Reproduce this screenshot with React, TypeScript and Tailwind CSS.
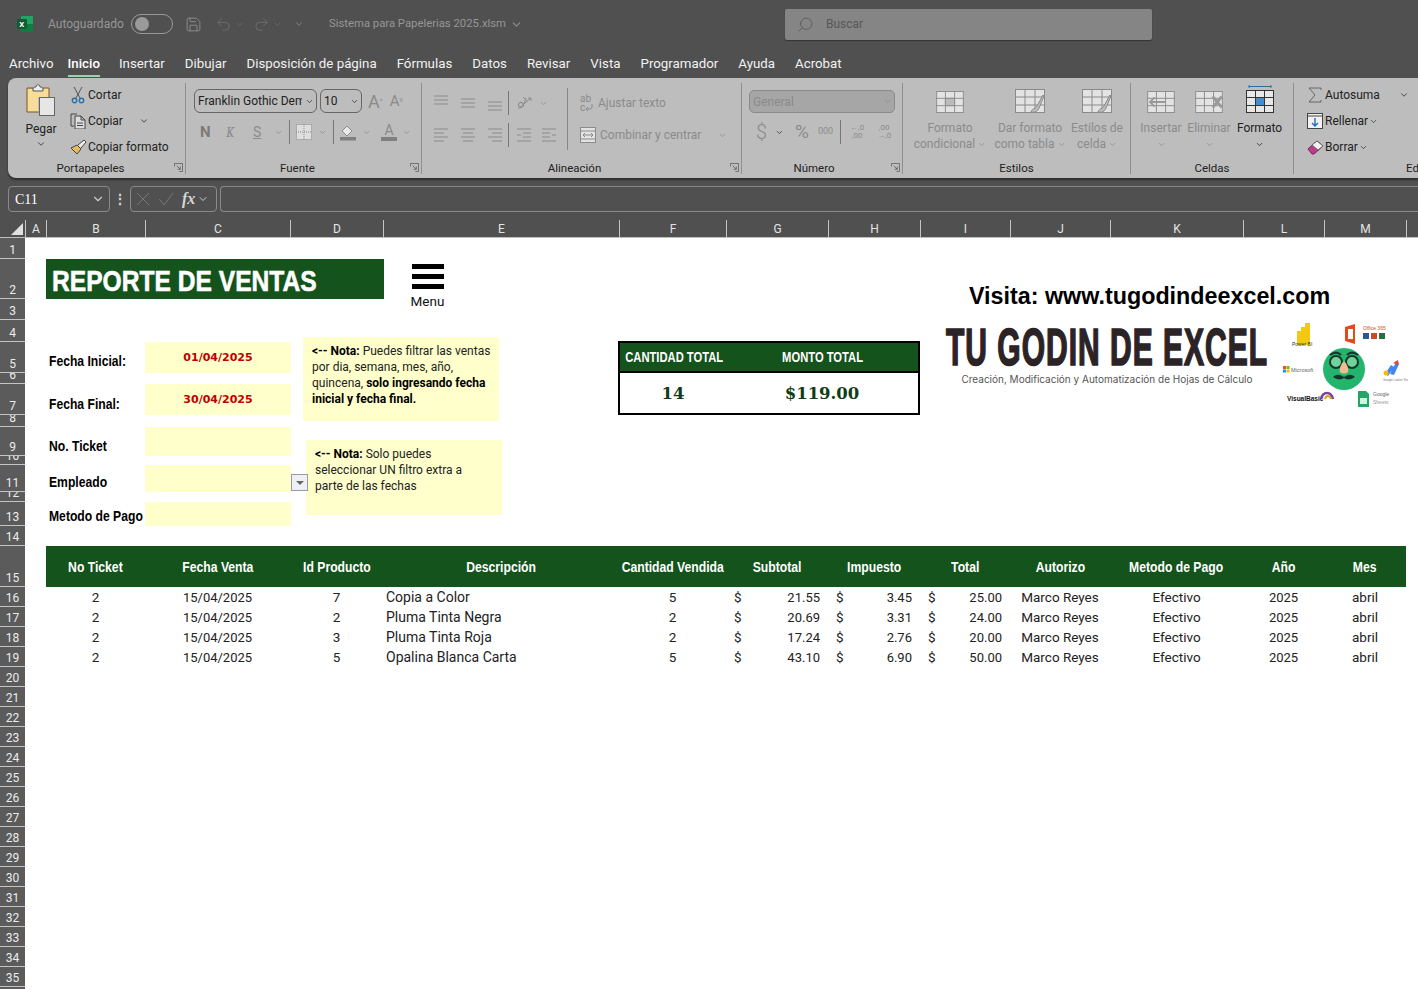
import { ChevronDown, Search, Undo2, Redo2, Save } from "lucide-react"
import type { ReactNode } from "react"

const sheetCols =
  "grid grid-cols-[21px_99px_145px_93px_236px_107px_102px_92px_90px_100px_133px_81px_82px]"
const heavy = "font-['Liberation_Sans',sans-serif] font-bold"
const dim = "#8b8b8b"

const columns = [
  ["A", 21], ["B", 99], ["C", 145], ["D", 93], ["E", 236], ["F", 107], ["G", 102],
  ["H", 92], ["I", 90], ["J", 100], ["K", 133], ["L", 81], ["M", 82],
] as const

const rowHeights = [
  21, 40, 21, 22, 31, 11, 31, 12, 29, 9, 27, 10, 24, 20, 41,
  20, 20, 20, 20, 20, 20, 20, 20, 20, 20, 20, 20, 20, 20, 20, 20, 20, 20, 20, 20,
]

const ventas = [
  { fecha: "15/04/2025", id: 7, desc: "Copia a Color", qty: 5, sub: "21.55", imp: "3.45", tot: "25.00" },
  { fecha: "15/04/2025", id: 2, desc: "Pluma Tinta Negra", qty: 2, sub: "20.69", imp: "3.31", tot: "24.00" },
  { fecha: "15/04/2025", id: 3, desc: "Pluma Tinta Roja", qty: 2, sub: "17.24", imp: "2.76", tot: "20.00" },
  { fecha: "15/04/2025", id: 5, desc: "Opalina Blanca Carta", qty: 5, sub: "43.10", imp: "6.90", tot: "50.00" },
]

const headers = [
  "No Ticket", "Fecha Venta", "Id Producto", "Descripción", "Cantidad Vendida", "Subtotal",
  "Impuesto", "Total", "Autorizo", "Metodo de Pago", "Año", "Mes",
]

const tabs = ["Insertar", "Dibujar", "Disposición de página", "Fórmulas", "Datos", "Revisar", "Vista", "Programador", "Ayuda", "Acrobat"]

function Chev({ color = "#333", size = 10 }: { color?: string; size?: number }) {
  return <ChevronDown size={size} color={color} strokeWidth={2} className="shrink-0" />
}

function Launcher() {
  return (
    <svg width="9" height="9" viewBox="0 0 10 10" fill="none" stroke="#666" className="absolute right-[2px] bottom-[2px]">
      <path d="M.5 4V.5H9.5V9.5H6M3 3l4 4M7 4v3H4" />
    </svg>
  )
}

function Group({ width, label, labelPad = "", launcher, children }: { width: string; label: string; labelPad?: string; launcher?: boolean; children: ReactNode }) {
  return (
    <section className={`${width} relative flex shrink-0 flex-col border-r border-[#8f8f8f]`}>
      <div className="min-h-0 flex-1">{children}</div>
      <div className={`${labelPad} h-[12px] text-center text-[11.5px] leading-[12px] text-[#222]`}>{label}</div>
      {launcher && <Launcher />}
    </section>
  )
}

function Bars({ rows }: { rows: number[][] }) {
  return (
    <svg width="16" height="18" viewBox="0 0 16 18" stroke={dim} className="shrink-0">
      {rows.map(([x1, x2, y], i) => (
        <path key={i} d={`M${x1} ${y}H${x2}`} />
      ))}
    </svg>
  )
}

function Grid({ w = 30, h = 24, color = "#8a8a8a", children }: { w?: number; h?: number; color?: string; children?: ReactNode }) {
  return (
    <svg width={w} height={h} viewBox="0 0 30 24" fill="none" stroke={color}>
      <rect x=".5" y=".5" width="29" height="23" fill="#e3e3e3" />
      <path d="M0 8H30M0 16H30M10 0V24M20 0V24" />
      {children}
    </svg>
  )
}

function Brush() {
  return <path d="M16 23c1-4 5-3 6-6l6-11 1 1-5 12c-1 3-4 5-8 4z" fill="#bdbdbd" stroke="#8a8a8a" />
}

function BigButton({ width, icon, lines, active }: { width: string; icon: ReactNode; lines: string[]; active?: boolean }) {
  const tone = active ? "text-[#222]" : "text-[#8b8b8b]"
  return (
    <div className={`${width} flex shrink-0 flex-col items-center ${tone}`}>
      <div className="flex h-[29px] items-end">{icon}</div>
      <div className="mt-[7px] flex h-[16px] items-center whitespace-nowrap text-xs">{lines[0]}</div>
      <div className="flex h-[16px] items-center justify-center gap-[2px] whitespace-nowrap text-xs">
        {lines[1]}
        <Chev color={active ? "#222" : dim} size={9} />
      </div>
    </div>
  )
}

function SmallRow({ icon, text }: { icon: ReactNode; text: string }) {
  return (
    <div className="flex h-[26px] items-center gap-[1px] whitespace-nowrap text-xs text-[#222]">
      <span className="flex w-[18px] justify-center">{icon}</span>
      {text}
    </div>
  )
}

function Ribbon() {
  return (
    <div className="ml-[8px] flex h-[100px] rounded-l-[8px] bg-[#bdbdbd] pb-[4px] pt-[5px] shadow-[0_2px_2px_#2c2c2c]">
      <Group width="w-[178px]" label="Portapapeles" labelPad="pr-[12px]" launcher>
        <div className="flex">
          <div className="flex w-[60px] flex-col items-center pl-[6px] text-xs text-[#222]">
            <svg width="32" height="34" viewBox="0 0 32 34" fill="none">
              <path d="M2 5h6M18 5h6v10M2 5v24h12" stroke="#7a5a20" fill="#f5d98f" />
              <path d="M3 6h20v8H13v14H3z" fill="#f7dc9a" />
              <path d="M8 6c0-2 2-2 3-2 0-3 4-3 4 0 1 0 3 0 3 2v2H8z" fill="#eee" stroke="#555" />
              <rect x="14.5" y="14.5" width="15" height="18" fill="#e6e6e6" stroke="#666" />
            </svg>
            <div className="mt-[4px]">Pegar</div>
            <div className="mt-[2px]"><Chev /></div>
          </div>
          <div className="-mt-[1px] ml-[1px]">
            <SmallRow
              text="Cortar"
              icon={
                <svg width="14" height="18" viewBox="0 0 14 18" fill="none" stroke="#555">
                  <path d="M3 1l6 11M11 1L5 12" />
                  <circle cx="3.5" cy="14.5" r="2.2" stroke="#2a6fb0" strokeWidth="1.4" />
                  <circle cx="10.5" cy="14.5" r="2.2" stroke="#2a6fb0" strokeWidth="1.4" />
                </svg>
              }
            />
            <div className="flex items-center gap-[16px]">
              <SmallRow
                text="Copiar"
                icon={
                  <svg width="16" height="16" viewBox="0 0 16 16" fill="none" stroke="#444">
                    <path d="M4 13H1V1h6" />
                    <path d="M5 3h6l4 4v9H5zM11 3v4h4M7 10h6M7 12.5h6" fill="#ddd" />
                  </svg>
                }
              />
              <Chev />
            </div>
            <SmallRow
              text="Copiar formato"
              icon={
                <svg width="17" height="16" viewBox="0 0 17 16" fill="none">
                  <path d="M1 9l6-3 4 4-4 5z" fill="#e9bd55" stroke="#444" />
                  <path d="M8 6l6-5 2 2-5 6" fill="#eee" stroke="#444" />
                </svg>
              }
            />
          </div>
        </div>
      </Group>

      <Group width="w-[236px]" label="Fuente" labelPad="pr-[12px]" launcher>
        <div className="pl-[8px] pt-[6px]">
          <div className="flex h-[24px] items-center">
            <div className="flex h-[24px] w-[123px] items-center justify-between overflow-hidden rounded-[6px] border border-[#666] pl-[3px] pr-[2px] text-xs text-[#222]">
              <span className="w-[104px] overflow-hidden whitespace-nowrap">Franklin Gothic Demi</span>
              <Chev size={9} />
            </div>
            <div className="ml-[3px] flex h-[24px] w-[42px] items-center justify-between rounded-[6px] border border-[#666] pl-[3px] pr-[2px] text-xs text-[#222]">
              10
              <Chev size={9} />
            </div>
            <span className="ml-[6px] text-[18px] text-[#8b8b8b]">A<sup className="text-[7px]">^</sup></span>
            <span className="ml-[7px] text-[15px] text-[#8b8b8b]">A<sup className="text-[7px]">v</sup></span>
          </div>
          <div className="mt-[7px] flex h-[24px] items-center text-[14px] text-[#8b8b8b]">
            <b className="ml-[6px] w-[26px] text-[15px] text-[#7a7a7a]">N</b>
            <i className="w-[27px] font-serif">K</i>
            <u className="w-[21px]">S</u>
            <Chev color={dim} size={9} />
            <span className="ml-[6px] h-[24px] w-px bg-[#777]" />
            <svg width="16" height="16" className="ml-[6px]" viewBox="0 0 16 16" fill="#dedede" stroke={dim} strokeDasharray="1 1">
              <rect x=".5" y=".5" width="15" height="15" />
              <path d="M8 0v16M0 8h16" />
            </svg>
            <span className="ml-[6px]"><Chev color={dim} size={9} /></span>
            <span className="ml-[6px] h-[24px] w-px bg-[#777]" />
            <svg width="16" height="18" className="ml-[6px]" viewBox="0 0 16 18">
              <path d="M2 8l5-5 5 5-5 5z" fill="#e8e8e8" stroke={dim} />
              <rect y="14" width="16" height="3.5" fill="#7f7f7f" />
            </svg>
            <span className="ml-[6px]"><Chev color={dim} size={9} /></span>
            <div className="ml-[10px] flex w-[16px] flex-col items-center leading-[13px]">
              A
              <span className="h-[4px] w-[16px] bg-[#7f7f7f]" />
            </div>
            <span className="ml-[5px]"><Chev color={dim} size={9} /></span>
          </div>
        </div>
      </Group>

      <Group width="w-[320px]" label="Alineación" labelPad="pr-[14px]" launcher>
        <div className="flex pl-[11px] pt-[5px]">
          <div className="w-[134px]">
            <div className="flex h-[30px] items-center gap-[11px]">
              <Bars rows={[[1, 15, 2], [1, 15, 6], [1, 15, 10]]} />
              <Bars rows={[[1, 15, 5], [1, 15, 9], [1, 15, 13]]} />
              <Bars rows={[[1, 15, 8], [1, 15, 12], [1, 15, 16]]} />
              <span className="-ml-[6px] h-[24px] w-px bg-[#777]" />
              <svg width="17" height="16" viewBox="0 0 17 16" fill="none" stroke={dim} className="-ml-[4px]">
                <ellipse cx="5" cy="10" rx="2.5" ry="2.5" transform="rotate(-45 5 10)" />
                <path d="M8 9l2-6M7 2l4 4M2 14L15 3M15 3h-3M15 3v3" />
              </svg>
              <span className="-ml-[5px]"><Chev color={dim} size={9} /></span>
            </div>
            <div className="mt-[2px] flex h-[30px] items-center gap-[11px]">
              <Bars rows={[[1, 15, 3], [1, 11, 7], [1, 15, 11], [1, 11, 15]]} />
              <Bars rows={[[1, 15, 3], [3, 13, 7], [1, 15, 11], [3, 13, 15]]} />
              <Bars rows={[[1, 15, 3], [5, 15, 7], [1, 15, 11], [5, 15, 15]]} />
              <span className="-ml-[6px] h-[24px] w-px bg-[#777]" />
              <span className="-ml-[4px]"><Bars rows={[[1, 15, 3], [7, 15, 7], [1, 5, 9], [7, 15, 11], [1, 15, 15]]} /></span>
              <span className="-ml-[2px]"><Bars rows={[[1, 15, 3], [1, 9, 7], [11, 15, 9], [1, 9, 11], [1, 15, 15]]} /></span>
            </div>
          </div>
          <div className="h-[62px] w-px bg-[#888]" />
          <div className="pl-[12px] text-xs text-[#8b8b8b]">
            <div className="flex h-[30px] items-center gap-[3px]">
              <div className="w-[15px] text-[10px] leading-[9px]">
                ab
                <div className="flex items-center">
                  c
                  <svg width="8" height="7" viewBox="0 0 8 7" fill="none" stroke={dim}><path d="M7 0v3a2 2 0 0 1-2 2H1M3 3L1 5l2 2" /></svg>
                </div>
              </div>
              Ajustar texto
            </div>
            <div className="mt-[2px] flex h-[30px] items-center gap-[3px]">
              <svg width="16" height="16" viewBox="0 0 16 16" fill="#e3e3e3" stroke={dim}>
                <rect x=".5" y=".5" width="15" height="15" />
                <path d="M0 4h16M0 12h16M3 8h10M3 8l2-2M3 8l2 2M13 8l-2-2M13 8l-2 2" />
              </svg>
              <span className="ml-[1px] whitespace-nowrap">Combinar y centrar</span>
              <span className="ml-[14px]"><Chev color={dim} size={9} /></span>
            </div>
          </div>
        </div>
      </Group>

      <Group width="w-[161px]" label="Número" labelPad="pr-[16px]" launcher>
        <div className="pl-[7px] pt-[7px]">
          <div className="flex h-[23px] w-[146px] items-center justify-between rounded-[5px] border border-[#8a8a8a] bg-[#a6a6a6] pl-[3px] pr-[2px] text-xs text-[#8a8a8a]">
            General
            <Chev color={dim} size={9} />
          </div>
          <div className="mt-[7px] flex h-[24px] items-center text-[#8b8b8b]">
            <span className="ml-[7px] w-[19px] text-[20px] font-light">$</span>
            <Chev size={9} />
            <span className="ml-[11px] text-[19px]">%</span>
            <span className="ml-[9px] text-[9px]">000</span>
            <span className="ml-[7px] h-[24px] w-px bg-[#777]" />
            <span className="ml-[7px] w-[18px] text-center text-[8px] leading-[8px]">←,0 ,00</span>
            <span className="ml-[9px] w-[18px] text-center text-[8px] leading-[8px]">,00 →,0</span>
          </div>
        </div>
      </Group>

      <Group width="w-[228px]" label="Estilos">
        <div className="flex pl-[7px] pt-[1px]">
          <BigButton
            width="w-[80px]"
            lines={["Formato", "condicional"]}
            icon={<Grid w={28} h={22}><path d="M10 8h10v8H10z" fill="#bbb" /></Grid>}
          />
          <BigButton width="w-[80px]" lines={["Dar formato", "como tabla"]} icon={<Grid w={30} h={24}><Brush /></Grid>} />
          <BigButton width="w-[54px]" lines={["Estilos de", "celda"]} icon={<Grid w={30} h={24}><Brush /></Grid>} />
        </div>
      </Group>

      <Group width="w-[163px]" label="Celdas">
        <div className="flex pl-[5px] pt-[1px]">
          <BigButton
            width="w-[50px]"
            lines={["Insertar", ""]}
            icon={<Grid w={30} h={22}><path d="M20 12H3M8 7l-5 5 5 5" stroke="#9a9a9a" strokeWidth="2" /></Grid>}
          />
          <BigButton
            width="w-[46px]"
            lines={["Eliminar", ""]}
            icon={<Grid w={30} h={22}><path d="M19 6l10 12M29 6L19 18" stroke="#9a9a9a" strokeWidth="3" /></Grid>}
          />
          <BigButton
            width="w-[55px]"
            active
            lines={["Formato", ""]}
            icon={
              <svg width="28" height="28" viewBox="0 0 28 28" fill="none" stroke="#333">
                <path d="M3 1.5h22M3 0v3M25 0v3" stroke="#2a6f9f" />
                <rect x=".5" y="5.5" width="27" height="22" fill="#e8e8e8" />
                <rect x="9" y="12" width="10" height="8" fill="#3e8ed0" stroke="none" />
                <path d="M0 12.5h28M0 20.5h28M9.5 5v23M18.5 5v23" />
              </svg>
            }
          />
        </div>
      </Group>

      <section className="flex flex-1 flex-col pl-[12px]">
        <div className="-mt-[1px] min-h-0 flex-1">
          <div className="flex items-center">
            <SmallRow
              text="Autosuma"
              icon={
                <svg width="14" height="16" viewBox="0 0 14 16" fill="none" stroke="#666">
                  <path d="M13 3V1H1l6 7-6 7h12v-2" />
                </svg>
              }
            />
            <span className="ml-[19px]"><Chev /></span>
          </div>
          <div className="flex items-center gap-[1px]">
            <SmallRow
              text="Rellenar"
              icon={
                <svg width="16" height="16" viewBox="0 0 16 16" fill="#f2f2f2" stroke="#444">
                  <rect x=".5" y=".5" width="15" height="15" />
                  <path d="M0 3h16" />
                  <path d="M8 5v8M5 10l3 3 3-3" stroke="#1f6fc0" strokeWidth="1.4" fill="none" />
                </svg>
              }
            />
            <Chev size={9} />
          </div>
          <div className="flex items-center gap-[1px]">
            <SmallRow
              text="Borrar"
              icon={
                <svg width="17" height="15" viewBox="0 0 17 15" fill="#c43a8d" stroke="#7c1d59">
                  <path d="M1 9l9-8 6 5-9 8H5z" />
                  <path d="M5 5l6 5 5-4-6-5z" fill="#f2f2f2" stroke="#666" />
                </svg>
              }
            />
            <Chev size={9} />
          </div>
        </div>
        <div className="h-[12px] whitespace-nowrap pl-[100px] text-[11.5px] leading-[12px] text-[#222]">Ed</div>
      </section>
    </div>
  )
}

function Squeeze({ ratio, children }: { ratio: string; children: ReactNode }) {
  return <span className={`${ratio} inline-block whitespace-nowrap`}>{children}</span>
}

function FormLabel({ row, pad, children }: { row: string; pad: string; children: ReactNode }) {
  return (
    <div className={`${row} ${pad} col-start-2 flex items-center whitespace-nowrap pl-[3px] text-[15px] text-black ${heavy}`}>
      <span className="inline-block origin-left scale-x-[0.81]">{children}</span>
    </div>
  )
}

function LogoBadges() {
  return (
    <svg width="125" height="90" viewBox="0 0 125 90" className="font-['Liberation_Sans',sans-serif]">
      <path d="M14 10h4v14h-4zM18 6h4v18h-4zM22 2h5v22h-5z" fill="#f2c811" />
      <text x="9" y="25" fontSize="5" fill="#333">Power BI</text>
      <path d="M62 6l10-3v20l-10-3z" fill="#e64a19" />
      <path d="M65 8h5v10h-5z" fill="#fff" />
      <text x="80" y="9" fontSize="5" fill="#d34a24">Office 365</text>
      <rect x="80" y="12" width="6" height="6" fill="#2b579a" />
      <rect x="88" y="12" width="6" height="6" fill="#d24726" />
      <rect x="96" y="12" width="6" height="6" fill="#217346" />
      <rect x="0" y="45" width="3" height="3" fill="#f25022" />
      <rect x="3.5" y="45" width="3" height="3" fill="#7fba00" />
      <rect x="0" y="48.5" width="3" height="3" fill="#00a4ef" />
      <rect x="3.5" y="48.5" width="3" height="3" fill="#ffb900" />
      <text x="8" y="51" fontSize="5.5" fill="#666">Microsoft</text>
      <circle cx="61" cy="48" r="21" fill="#23b56d" />
      <circle cx="53" cy="41" r="6" fill="#6fd39b" stroke="#15362a" strokeWidth="2" />
      <circle cx="69" cy="41" r="6" fill="#6fd39b" stroke="#15362a" strokeWidth="2" />
      <path d="M47 34c4-3 8-3 11 0M64 34c3-3 7-3 11 0" stroke="#15362a" strokeWidth="2" fill="none" />
      <path d="M61 40c-3 3-5 8-4 11 2 2 6 2 8 0 1-3-1-8-4-11z" fill="#f0bd94" />
      <path d="M50 56c4-4 8-2 11 0 3-2 7-4 11 0-4 3-8 3-11 1-3 2-7 2-11-1z" fill="#15362a" />
      <path d="M102 53l6-9 3 2-6 9zM107 53l6-12 3 2-5 11z" fill="#4285f4" />
      <path d="M110 42l5-3 1 5z" fill="#ea4335" />
      <circle cx="103" cy="52" r="2.5" fill="#fbbc04" />
      <text x="100" y="60" fontSize="3" fill="#777">Google Looker Studio</text>
      <text x="4" y="80" fontSize="6.5" fontWeight="700" fill="#111">VisualBasic</text>
      <path d="M38 78c2-8 10-8 12 0" fill="none" stroke="#7b3fa0" strokeWidth="2.5" />
      <path d="M42 78c1-4 5-4 6 0" fill="none" stroke="#d9a015" strokeWidth="2" />
      <path d="M75 70h8l3 3v13H75z" fill="#23a566" />
      <path d="M77 77h7v6h-7z" fill="#d8f0e2" />
      <text x="90" y="75" fontSize="5" fill="#666">Google</text>
      <text x="90" y="83" fontSize="5" fill="#9a9a9a">Sheets</text>
    </svg>
  )
}

function Sheet() {
  return (
    <div className="relative flex-1 bg-white">
      <div className={`${sheetCols} grid-rows-[21px_40px_21px_22px_31px_11px_31px_12px_29px_9px_27px_10px_24px_20px]`}>
        <div className={`col-start-2 col-span-3 row-start-2 -mr-px flex items-center bg-[#14531c] pl-[6px] pt-[2px] text-[30px] text-white [-webkit-text-stroke:0.6px_white] ${heavy}`}>
          <span className="inline-block origin-left scale-x-[0.82] whitespace-nowrap">REPORTE DE VENTAS</span>
        </div>

        <FormLabel row="row-start-5" pad="pt-[8px]">Fecha Inicial:</FormLabel>
        <FormLabel row="row-start-7" pad="pt-[10px]">Fecha Final:</FormLabel>
        <FormLabel row="row-start-9" pad="pt-[10px]">No. Ticket</FormLabel>
        <FormLabel row="row-start-11" pad="pt-[8px]">Empleado</FormLabel>
        <FormLabel row="row-start-13" pad="pt-[4px]">Metodo de Pago</FormLabel>

        <div className="col-start-3 row-start-5 -mr-px flex items-center justify-center bg-[#ffffcc] pt-[2px] font-['DejaVu_Sans',sans-serif] text-[11px] font-bold text-[#c00000]">01/04/2025</div>
        <div className="col-start-3 row-start-7 -mr-px flex items-center justify-center bg-[#ffffcc] pt-[2px] font-['DejaVu_Sans',sans-serif] text-[11px] font-bold text-[#c00000]">30/04/2025</div>
        <div className="col-start-3 row-start-9 -mr-px bg-[#ffffcc]" />
        <div className="col-start-3 row-start-11 -mr-px bg-[#ffffcc]" />
        <div className="col-start-3 row-start-13 -mr-px bg-[#ffffcc]" />

        <div className={`col-start-6 row-start-5 -ml-px -mt-px flex items-center justify-center border-y-2 border-l-2 border-black bg-[#14531c] pl-[2px] text-[14px] text-white ${heavy}`}>
          <Squeeze ratio="scale-x-[0.8]">CANTIDAD TOTAL</Squeeze>
        </div>
        <div className={`col-start-7 col-span-2 row-start-5 -mt-px flex items-center justify-center border-y-2 border-r-2 border-black bg-[#14531c] pl-[2px] text-[14px] text-white ${heavy}`}>
          <Squeeze ratio="scale-x-[0.8]">MONTO TOTAL</Squeeze>
        </div>
        <div className="col-start-6 row-start-6 row-span-2 -ml-px flex items-center justify-center border-b-2 border-l-2 border-black pt-[3px] font-['DejaVu_Serif',serif] text-[16.5px] font-bold text-[#0f3d16]">14</div>
        <div className="col-start-7 col-span-2 row-start-6 row-span-2 flex items-center justify-center border-b-2 border-r-2 border-black pt-[3px] font-['DejaVu_Serif',serif] text-[16.5px] font-bold text-[#0f3d16]">$119.00</div>
      </div>

      <div className={`${sheetCols} h-[41px] ${heavy}`}>
        {headers.map((h, i) => (
          <div
            key={h}
            className={`${i === 0 ? "col-start-2" : ""} flex items-center justify-center bg-[#14531c] pt-[2px] text-[14px] text-white`}
          >
            <Squeeze ratio="scale-x-[0.87]">{h}</Squeeze>
          </div>
        ))}
      </div>

      <div className="font-['Roboto',sans-serif] text-[13.5px] leading-[18px] text-[#222]">
        {ventas.map((v) => (
          <div key={v.desc} className={`${sheetCols} h-[20px] items-baseline pt-[1px]`}>
            <div className="col-start-2 text-center">2</div>
            <div className="text-center text-[13px]">{v.fecha}</div>
            <div className="text-center">{v.id}</div>
            <div className="pl-[3px] text-[14px]">{v.desc}</div>
            <div className="text-center">{v.qty}</div>
            <div className="flex items-baseline justify-between px-[8px]"><span>$</span><span className="text-[13px]">{v.sub}</span></div>
            <div className="flex items-baseline justify-between px-[8px]"><span>$</span><span className="text-[13px]">{v.imp}</span></div>
            <div className="flex items-baseline justify-between px-[8px]"><span>$</span><span className="text-[13px]">{v.tot}</span></div>
            <div className="text-center">Marco Reyes</div>
            <div className="text-center">Efectivo</div>
            <div className="text-center text-[13px]">2025</div>
            <div className="text-center">abril</div>
          </div>
        ))}
      </div>

      {/* shapes and text boxes that float over the cells */}
      <div className="absolute left-[386px] top-[26px] flex w-[33px] flex-col items-center">
        <div className="flex w-[32px] flex-col gap-[5px]">
          <span className="h-[5px] bg-black" />
          <span className="h-[5px] bg-black" />
          <span className="h-[5px] bg-black" />
        </div>
        <span className="mt-[4px] font-['Roboto',sans-serif] text-[13.5px] leading-[16px] text-[#111]">Menu</span>
      </div>

      <div className="absolute left-[278px] top-[99px] h-[84px] w-[196px] whitespace-nowrap bg-[#ffffcc] pl-[9px] pt-[6px] font-['Roboto',sans-serif] text-xs leading-[16px] text-[#222]">
        <b className="text-black">&lt;-- Nota:</b> Puedes filtrar las ventas<br />
        por dia, semana, mes, año,<br />
        quincena, <b className="text-black">solo ingresando fecha</b><br />
        <b className="text-black">inicial y fecha final.</b>
      </div>
      <div className="absolute left-[281px] top-[202px] h-[75px] w-[196px] whitespace-nowrap bg-[#ffffcc] pl-[9px] pt-[6px] font-['Roboto',sans-serif] text-xs leading-[16px] text-[#222]">
        <b className="text-black">&lt;-- Nota:</b> Solo puedes<br />
        seleccionar UN filtro extra a<br />
        parte de las fechas
      </div>

      <div className="absolute left-[266px] top-[236px] flex h-[17px] w-[17px] items-center justify-center border border-[#9a9a9a] bg-[#eef0f7]">
        <span className="border-x-[4px] border-t-[4px] border-x-transparent border-t-[#666]" />
      </div>

      <div className="absolute left-[944px] top-[44px] whitespace-nowrap font-['Liberation_Sans',sans-serif] text-[23.3px] font-bold leading-[28px] text-black">
        Visita: www.tugodindeexcel.com
      </div>
      <div className="absolute left-[921px] top-[84px] w-[322px] text-center">
        <div className={`${heavy} origin-top scale-y-[1.7] whitespace-nowrap text-[30px] leading-[30px] tracking-[1px] text-[#2b2326] [-webkit-text-stroke:1px_#2b2326]`}>
          TU GODIN DE EXCEL
        </div>
        <div className="mt-[21px] whitespace-nowrap font-['Inter',sans-serif] text-[10px] leading-[12px] text-[#555]">
          Creación, Modificación y Automatización de Hojas de Cálculo
        </div>
      </div>
      <div className="absolute left-[1258px] top-[83px]">
        <LogoBadges />
      </div>
    </div>
  )
}

export default function App() {
  return (
    <div className="h-[989px] w-[1418px] overflow-hidden bg-[#505050] font-['Roboto',sans-serif]">
      <header className="flex h-[48px] items-center text-xs text-[#969696]">
        <svg width="16" height="16" viewBox="0 0 16 16" className="ml-[17px] shrink-0 font-['Liberation_Sans',sans-serif]">
          <rect x="4" width="12" height="16" rx="1" fill="#21a366" />
          <rect x="4" y="8" width="12" height="8" fill="#107c41" />
          <rect y="3" width="10" height="10" rx="1" fill="#0e5c2f" />
          <text x="2.3" y="11" fontSize="9" fontWeight="700" fill="#fff">x</text>
        </svg>
        <span className="ml-[15px] w-[76px] whitespace-nowrap">Autoguardado</span>
        <div className="ml-[7px] flex h-[20px] w-[42px] items-center rounded-full border border-[#9a9a9a] pl-[3px]">
          <span className="h-[14px] w-[14px] rounded-full bg-[#9a9a9a]" />
        </div>
        <Save size={17} color="#8f8f8f" strokeWidth={1.3} className="ml-[12px]" />
        <Undo2 size={17} color="#6f6f6f" strokeWidth={1.3} className="ml-[13px]" />
        <span className="ml-[3px]"><Chev color="#6f6f6f" size={9} /></span>
        <Redo2 size={17} color="#6f6f6f" strokeWidth={1.3} className="ml-[9px]" />
        <span className="ml-[3px]"><Chev color="#6f6f6f" size={9} /></span>
        <span className="ml-[12px]"><Chev color="#8f8f8f" size={10} /></span>
        <span className="ml-[25px] w-[177px] whitespace-nowrap text-[11.3px]">Sistema para Papelerias 2025.xlsm</span>
        <span className="ml-[4px]"><Chev color="#8f8f8f" size={13} /></span>
        <div className="ml-[262px] flex h-[31px] w-[367px] items-center rounded-[2px] bg-[#858585] pl-[12px] text-[#585858] shadow-[0_1px_1px_#333]">
          <Search size={17} color="#5c5c5c" strokeWidth={1.3} className="-scale-x-100" />
          <span className="ml-[12px]">Buscar</span>
        </div>
      </header>

      <nav className="flex h-[30px] items-center pl-[9px] pt-[1px] text-[13.3px] text-[#f2f2f2]">
        <span>Archivo</span>
        <span className="relative ml-[14px] font-medium text-white">
          Inicio
          <span className="absolute -bottom-[4px] left-0 h-[2px] w-full bg-[#98d3ab]" />
        </span>
        <div className="ml-[19px] flex gap-[20px]">
          {tabs.map((t) => (
            <span key={t} className="whitespace-nowrap">{t}</span>
          ))}
        </div>
      </nav>

      <Ribbon />

      <div className="flex h-[34px] items-end pl-[8px] text-[#d5d5d5]">
        <div className="flex h-[26px] w-[102px] items-center justify-between rounded-[4px] border border-[#8a8a8a] pl-[6px] pr-[4px] font-['Liberation_Serif',serif] text-[14px] text-white">
          C11
          <Chev color="#ccc" size={14} />
        </div>
        <div className="flex h-[26px] w-[20px] items-center justify-center text-[14px] font-bold">⋮</div>
        <div className="flex h-[26px] w-[87px] items-center gap-[8px] rounded-[4px] border border-[#8a8a8a] pl-[5px]">
          <svg width="14" height="14" viewBox="0 0 14 14" stroke="#777" fill="none"><path d="M1 1l12 12M13 1L1 13" /></svg>
          <svg width="16" height="14" viewBox="0 0 16 14" stroke="#777" fill="none"><path d="M1 7l5 6L15 1" /></svg>
          <i className="font-['Liberation_Serif',serif] text-[16px] font-bold">fx</i>
          <span className="-ml-[6px]"><Chev color="#ccc" size={12} /></span>
        </div>
        <div className="ml-[3px] h-[26px] flex-1 rounded-l-[4px] border border-r-0 border-[#8a8a8a]" />
      </div>

      <div className="mt-[8px] flex h-[17px]">
        <div className="flex w-[25px] items-end justify-end pb-[2px] pr-[2px]">
          <span className="border-b-[12px] border-l-[12px] border-b-[#e0e0e0] border-l-transparent" />
        </div>
        {columns.map(([name, w]) => (
          <div
            key={name}
            className="flex items-center justify-center border-l border-[#c4c4c4] text-xs text-[#e4e4e4]"
            style={{ width: w }}
          >
            {name}
          </div>
        ))}
        <div className="flex-1 border-l border-[#c4c4c4]" />
      </div>

      <div className="flex h-[752px] border-t border-[#bdbdbd]">
        <div className="w-[25px] shrink-0 bg-[#5b5b5b]">
          {rowHeights.map((h, i) => (
            <div
              key={i}
              className="flex items-end justify-center overflow-hidden border-b border-[#c4c4c4] text-xs leading-[18px] text-[#ececec]"
              style={{ height: h }}
            >
              <span className="block h-[17px] shrink-0">{i + 1}</span>
            </div>
          ))}
        </div>
        <Sheet />
      </div>
    </div>
  )
}
